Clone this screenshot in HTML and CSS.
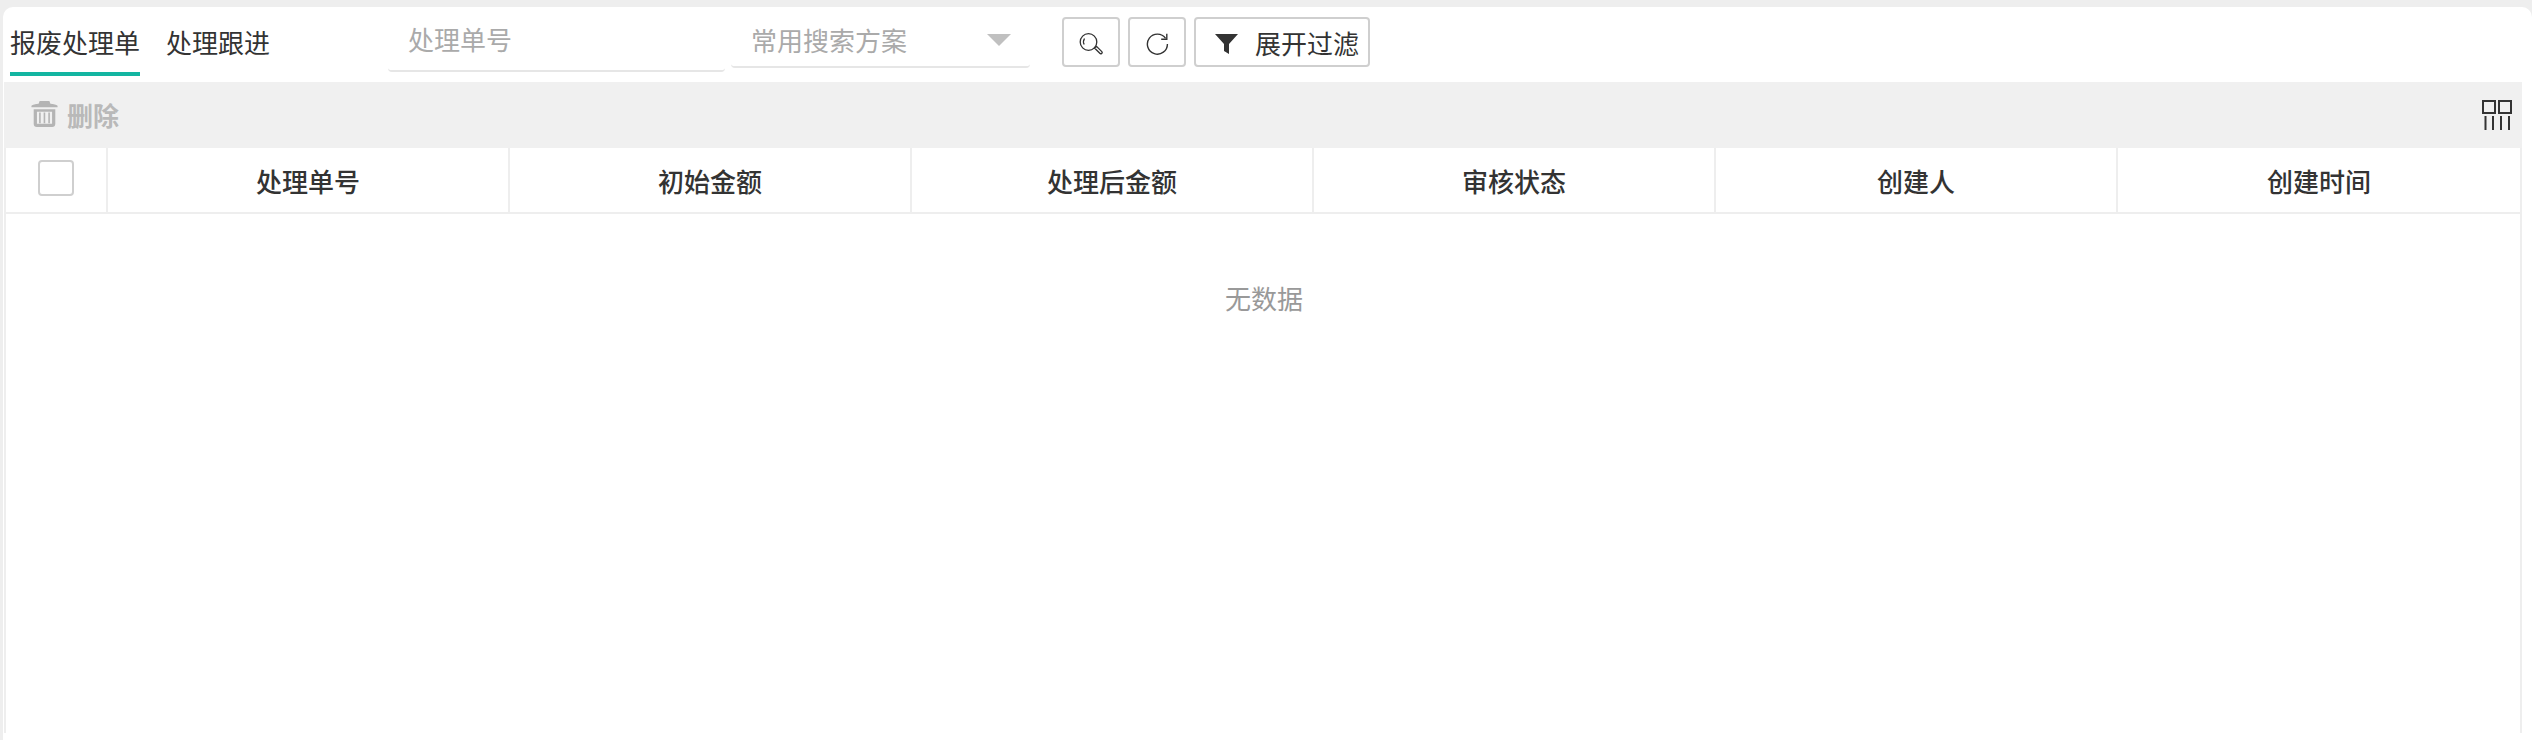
FILE: index.html
```html
<!DOCTYPE html>
<html lang="zh-CN">
<head>
<meta charset="utf-8">
<title>报废处理单</title>
<link rel="stylesheet" href="styles.css">
</head>
<body>
<main class="panel">
  <header class="topbar">
    <nav class="tabs">
      <a class="tab tab-active">报废处理单</a>
      <a class="tab">处理跟进</a>
    </nav>
    <input class="search-input" type="text" placeholder="处理单号">
    <div class="scheme-select">
      <span>常用搜索方案</span>
      <i class="arrow"></i>
    </div>
    <div class="actions">
      <button class="btn btn-icon" type="button">
        <svg class="icon-24" viewBox="0 0 24 22" fill="none" stroke="#333" stroke-width="1.300">
          <circle cx="9.500" cy="9" r="8.300"/>
          <path d="M5.500 5.500C4.300 7.500 4.300 10 5.200 11.500"/>
          <path d="M15.500 15l2-1.600 5.300 5.200a1.300 1.300 0 0 1-2 1.700z"/>
        </svg>
      </button>
      <button class="btn btn-icon" type="button">
        <svg class="icon-24" viewBox="0 0 24 22" fill="none" stroke="#333" stroke-width="1.400">
          <path d="M20.600 5.400A10 10 0 1 0 22.400 11"/>
          <path d="M21.800 0.800v5.400h-5.600"/>
        </svg>
      </button>
      <button class="btn btn-filter" type="button">
        <svg class="icon-funnel" viewBox="0 0 23 20"><path d="M0 0h23l-9 10v10l-5-3V10z" fill="#333"/></svg>
        <span>展开过滤</span>
      </button>
    </div>
  </header>

  <section class="grid-box">
    <div class="grid-tools">
      <div class="del-action">
        <svg class="icon-trash" viewBox="0 0 25 24" fill="#b4b4b4">
          <path d="M8 0h9l1 2.400c3 .2 5.600.9 6.600 2v1.400H.4V4.400c1-1.100 3.600-1.800 6.600-2z"/>
          <path fill-rule="evenodd" d="M2.500 7.500h20V21a3 3 0 0 1-3 3h-14a3 3 0 0 1-3-3zM5.500 10v11h14V10z"/>
          <path d="M7.500 10.500h1.500v10h-1.500zM11.700 10.500h1.500v10h-1.500zM16 10.500h1.500v10H16z"/>
        </svg>
        <span>删除</span>
      </div>
      <svg class="icon-cols" viewBox="0 0 30 30" fill="none" stroke="#333" stroke-width="2">
        <path d="M1 1h12v12H1zM17 1h12v12H17z"/>
        <path d="M3.500 16v14M11 16v14M19 16v14M27 16v14"/>
      </svg>
    </div>
    <div class="grid-wrap">
      <div class="grid-head">
        <div class="cell cell-check"><span class="checkbox"></span></div>
        <div class="cell">处理单号</div>
        <div class="cell">初始金额</div>
        <div class="cell">处理后金额</div>
        <div class="cell">审核状态</div>
        <div class="cell">创建人</div>
        <div class="cell cell-last">创建时间</div>
      </div>
      <div class="grid-empty">无数据</div>
    </div>
  </section>
</main>
</body>
</html>
```

FILE: styles.css
```css
* {
  box-sizing: border-box;
}

html,
body {
  margin: 0;
  height: 740px;
  overflow: hidden;
  background: #eeeeee;
}

body {
  padding: 7px 0 0 3px;
  font-family: "Noto Sans CJK SC", "Noto Sans", sans-serif;
  font-size: 26px;
  color: #333333;
}

.panel {
  height: 733px;
  background: #ffffff;
  border-radius: 10px 10px 0 0;
  overflow: hidden;
}

.topbar {
  display: flex;
  align-items: flex-start;
  height: 75px;
  padding-left: 7px;
}

.tabs {
  display: flex;
  gap: 26px;
  margin-top: 18px;
  height: 51px;
}

.tab {
  height: 51px;
  line-height: 33px;
  padding-bottom: 14px;
  color: #333333;
}

.tab-active {
  border-bottom: 4px solid #13b5a1;
}

.search-input {
  width: 337px;
  height: 54px;
  margin: 11px 0 0 118px;
  padding: 0 20px 11px;
  border: 0;
  border-bottom: 2px solid #e6e6e6;
  border-radius: 4px;
  outline: 0;
  background: transparent;
  font: inherit;
  color: #333333;
}

.search-input::placeholder {
  color: #aaaaaa;
  opacity: 1;
}

.scheme-select {
  display: flex;
  align-items: center;
  justify-content: space-between;
  width: 299px;
  height: 50px;
  margin: 11px 0 0 6px;
  padding: 0 19px 5px 20px;
  border-bottom: 2px solid #e6e6e6;
  border-radius: 4px;
  color: #aaaaaa;
}

.arrow {
  width: 0;
  height: 0;
  border-left: 12px solid transparent;
  border-right: 12px solid transparent;
  border-top: 12px solid #c0c0c0;
}

.actions {
  display: flex;
  gap: 8px;
  margin: 10px 0 0 32px;
}

.btn {
  display: flex;
  align-items: center;
  height: 50px;
  padding: 0;
  border: 2px solid #cfcfcf;
  border-radius: 4px;
  background: #ffffff;
  font: inherit;
  color: #333333;
}

.btn-icon {
  justify-content: center;
  width: 58px;
  padding-top: 4px;
}

.btn-filter {
  width: 176px;
  padding-left: 19px;
  gap: 17px;
}

.icon-24 {
  width: 24px;
  height: 22px;
}

.icon-funnel {
  width: 23px;
  height: 20px;
  margin-top: 4px;
}

.grid-box {
  margin: 0 10px 0 1px;
}

.grid-tools {
  display: flex;
  align-items: center;
  justify-content: space-between;
  height: 66px;
  padding: 0 10px 0 27px;
  background: #f0f0f0;
}

.del-action {
  display: flex;
  align-items: center;
  gap: 9px;
  padding-bottom: 2px;
  font-weight: 700;
  color: #b9b9b9;
}

.icon-trash {
  width: 27px;
  height: 26px;
}

.icon-cols {
  width: 30px;
  height: 30px;
}

.grid-wrap {
  height: 585px;
  border-left: 2px solid #eeeeee;
  border-right: 2px solid #eeeeee;
}

.grid-head {
  display: grid;
  grid-template-columns: 102px repeat(6, 1fr);
  height: 66px;
  border-bottom: 2px solid #eeeeee;
}

.cell {
  display: flex;
  align-items: center;
  justify-content: center;
  padding-top: 1px;
  border-right: 2px solid #eeeeee;
  font-weight: 500;
  color: #333333;
}

.cell-check {
  padding: 0 0 4px;
}

.cell-last {
  border-right: 0;
}

.checkbox {
  width: 36px;
  height: 36px;
  border: 2px solid #cfcfcf;
  border-radius: 4px;
}

.grid-empty {
  padding: 66px 0 0 2px;
  line-height: 36px;
  text-align: center;
  color: #999999;
}
```
